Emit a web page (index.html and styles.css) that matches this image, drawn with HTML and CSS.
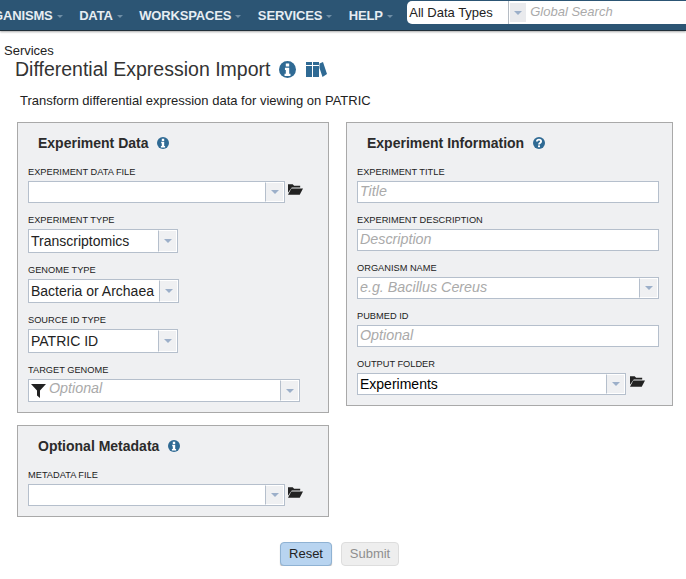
FILE: index.html
```html
<!DOCTYPE html>
<html lang="en">

<head>
  <meta charset="UTF-8">
  <title>Differential Expression Import</title>
  <link rel="stylesheet" href="styles.css">
</head>

<body>
  <div class="navbar">
    <span class="nav-item first">GANISMS<i class="caret"></i></span>
    <span class="nav-item">DATA<i class="caret"></i></span>
    <span class="nav-item">WORKSPACES<i class="caret"></i></span>
    <span class="nav-item">SERVICES<i class="caret"></i></span>
    <span class="nav-item">HELP<i class="caret"></i></span>
    <div class="search">
      <span class="search-type">All Data Types</span>
      <span class="search-arrow"><i></i></span>
      <span class="search-text">Global Search</span>
    </div>
  </div>

  <div class="crumb">Services</div>
  <div class="title-row">
    <span class="title">Differential Expression Import</span>
    <svg class="icon-info-lg" viewBox="0 0 20 20"><use href="#info"></use></svg>
    <svg class="icon-books" viewBox="0 0 21 15">
      <path fill="#2f6a94" d="M0 0h6v3H0zM0 4h6v11H0zM7 0h6v3H7zM7 4h6v11H7zM13.500 1.500L17 0l4 12-4.500 3L13.500 6z" />
    </svg>
  </div>
  <p class="intro">Transform differential expression data for viewing on PATRIC</p>

  <div class="columns">
    <div class="col">
      <div class="panel data-panel">
        <h3>Experiment Data <svg class="icon-info" viewBox="0 0 20 20"><use href="#info"></use></svg></h3>
        <label>EXPERIMENT DATA FILE</label>
        <div class="file-row">
          <div class="combo w257"><span class="value"></span><span class="arrow"><i></i></span></div>
          <svg class="folder" viewBox="0 0 16 12"><use href="#folder"></use></svg>
        </div>
        <label>EXPERIMENT TYPE</label>
        <div class="combo tall w150"><span class="value big">Transcriptomics</span><span class="arrow"><i></i></span></div>
        <label>GENOME TYPE</label>
        <div class="combo tall w151"><span class="value big">Bacteria or Archaea</span><span class="arrow"><i></i></span></div>
        <label>SOURCE ID TYPE</label>
        <div class="combo tall w150"><span class="value big">PATRIC ID</span><span class="arrow"><i></i></span></div>
        <label>TARGET GENOME</label>
        <div class="combo target w272">
          <svg class="filter" viewBox="0 0 15 14"><path fill="#222" d="M0 0h15L9 6.500V14L6 11.500V6.500z" /></svg>
          <span class="value hint">Optional</span><span class="arrow"><i></i></span>
        </div>
      </div>

      <div class="panel meta-panel">
        <h3>Optional Metadata <svg class="icon-info" viewBox="0 0 20 20"><use href="#info"></use></svg></h3>
        <label>METADATA FILE</label>
        <div class="file-row">
          <div class="combo w257"><span class="value"></span><span class="arrow"><i></i></span></div>
          <svg class="folder" viewBox="0 0 16 12"><use href="#folder"></use></svg>
        </div>
      </div>
    </div>

    <div class="col">
      <div class="panel info-panel">
        <h3>Experiment Information <svg class="icon-info" viewBox="0 0 20 20">
            <circle cx="10" cy="10" r="10" fill="#2f6a94" />
            <path fill="none" stroke="#fff" stroke-width="3" d="M6.500 7.500C6.500 3.500 13.500 3.500 13.500 7.500C13.500 10 10 10 10 12.500" />
            <path fill="#fff" d="M8.300 14h3.400v3H8.300z" />
          </svg></h3>
        <label>EXPERIMENT TITLE</label>
        <div class="text-box w302"><span class="value hint">Title</span></div>
        <label>EXPERIMENT DESCRIPTION</label>
        <div class="text-box w302"><span class="value hint">Description</span></div>
        <label>ORGANISM NAME</label>
        <div class="combo w302"><span class="value hint">e.g. Bacillus Cereus</span><span class="arrow"><i></i></span></div>
        <label>PUBMED ID</label>
        <div class="text-box w302"><span class="value hint">Optional</span></div>
        <label>OUTPUT FOLDER</label>
        <div class="file-row output-row">
          <div class="combo w269"><span class="value dark">Experiments</span><span class="arrow"><i></i></span></div>
          <svg class="folder" viewBox="0 0 16 12"><use href="#folder"></use></svg>
        </div>
      </div>
    </div>
  </div>

  <div class="buttons">
    <span class="btn reset">Reset</span>
    <span class="btn submit">Submit</span>
  </div>

  <svg class="defs" width="0" height="0">
    <defs>
      <g id="info">
        <circle cx="10" cy="10" r="10" fill="#2f6a94" />
        <path fill="#fff" d="M8 3h4v3.500H8zM7 8h5v7h1.500v2.500h-7V15H8v-4.500H7z" />
      </g>
      <g id="folder">
        <path fill="#222" d="M0 1h5l1.500 1.500H13V4.500H4L0 10z" />
        <path fill="#222" d="M3.500 5.500H16L12.500 12H0z" />
      </g>
    </defs>
  </svg>
</body>

</html>
```

FILE: styles.css
```css
body {
  margin: 0;
  background-color: #fff;
  color: #222;
  font-family: "Liberation Sans", Arial, sans-serif;
  font-size: 13px;
  overflow: hidden;
}

.navbar {
  display: flex;
  align-items: center;
  height: 30px;
  background-color: #2c5574;
  border-bottom: 1px solid #22303a;
  box-shadow: 0 1px 2px #aaa;
  overflow: hidden;
  white-space: nowrap;
}

.nav-item {
  color: #e6edf2;
  font-size: 13px;
  letter-spacing: -0.15px;
  font-weight: bold;
  margin-right: 16.500px;
}

.nav-item.first {
  margin-left: -7px;
}

.caret {
  display: inline-block;
  margin-left: 4px;
  vertical-align: middle;
  border-top: 3px solid #6f8ea5;
  border-left: 3px solid transparent;
  border-right: 3px solid transparent;
}

.search {
  display: flex;
  align-items: center;
  align-self: flex-start;
  flex: 1;
  height: 23px;
  margin-top: 1px;
  margin-left: -2px;
  background-color: #fff;
  border-radius: 5px 0 0 5px;
}

.search-type {
  width: 99px;
  padding-left: 2px;
  color: #222;
  border-right: 1px solid #b5bcc4;
  line-height: 23px;
}

.search-arrow {
  display: flex;
  align-items: center;
  justify-content: center;
  width: 16px;
  height: 19px;
  margin-left: 1px;
  background-color: #e9eaed;
}

.search-arrow i {
  border-top: 4px solid #9cafc9;
  border-left: 4px solid transparent;
  border-right: 4px solid transparent;
}

.search-text {
  margin-left: 4px;
  color: #aaa;
  font-style: italic;
  padding-bottom: 3px;
}

.crumb {
  margin: 12px 0 0 4px;
  line-height: 15px;
}

.title-row {
  display: flex;
  align-items: center;
  margin: -1px 0 0 15px;
  height: 24px;
}

.title {
  font-size: 19.500px;
  color: #333;
}

.icon-info-lg {
  width: 17px;
  height: 17px;
  margin-left: 9px;
}

.icon-books {
  width: 21px;
  height: 15px;
  margin-left: 10px;
}

.intro {
  margin: 12px 0 0 20px;
  line-height: 15px;
}

.columns {
  display: flex;
  align-items: flex-start;
  gap: 17px;
  margin: 14px 0 0 17px;
}

.col {
  display: flex;
  flex-direction: column;
  gap: 12px;
}

.panel {
  box-sizing: border-box;
  background-color: #eff0f2;
  border: 1px solid #a9a9a9;
  padding: 0 10px;
}

.data-panel,
.meta-panel {
  width: 312px;
}

.data-panel {
  height: 291px;
}

.meta-panel {
  height: 92px;
}

.info-panel {
  width: 327px;
  height: 284px;
}

.panel h3 {
  display: flex;
  align-items: center;
  gap: 9px;
  height: 18px;
  margin: 11px 0 14px 10px;
  font-size: 14px;
  color: #2b2b2b;
}

.icon-info {
  width: 12px;
  height: 12px;
}

label {
  display: block;
  height: 12px;
  margin-bottom: 3px;
  font-size: 9.250px;
  line-height: 12px;
  color: #222;
}

.combo,
.text-box {
  display: flex;
  box-sizing: border-box;
  height: 22px;
  margin-bottom: 11px;
  background-color: #fff;
  border: 1px solid #b5bfcc;
}

.combo.tall {
  height: 24px;
}

.combo.target {
  height: 23px;
  margin-bottom: 0;
}

.w257 {
  width: 257px;
}

.w269 {
  width: 269px;
}

.w302 {
  width: 302px;
}

.w150 {
  width: 150px;
}

.w151 {
  width: 151px;
}

.w272 {
  width: 272px;
}

.value {
  flex: 1;
  min-width: 0;
  padding-left: 2px;
  font-size: 14px;
  line-height: 20px;
  white-space: nowrap;
  overflow: hidden;
}

.value.big {
  line-height: 22px;
  color: #222;
}

.value.dark {
  color: #000;
}

.value.hint {
  color: #aaa;
  font-style: italic;
  font-size: 14.300px;
  line-height: 18px;
}

.target .value.hint {
  line-height: 17px;
}

.arrow {
  display: flex;
  align-items: center;
  justify-content: center;
  box-sizing: border-box;
  width: 19px;
  background-color: #eff0f2;
  border-left: 1px solid #b5bfcc;
  border-top: 1px solid #fff;
  border-bottom: 1px solid #fff;
  border-right: 1px solid #fff;
}

.arrow i {
  border-top: 4px solid #9cafc9;
  border-left: 4px solid transparent;
  border-right: 4px solid transparent;
}

.file-row {
  display: flex;
  align-items: flex-start;
  gap: 3px;
}

.output-row {
  gap: 4px;
}

.file-row .folder {
  width: 15px;
  height: 12px;
  margin-top: 2px;
}

.filter {
  width: 15px;
  height: 14px;
  margin: 4px 0 0 2px;
}

.target .value {
  padding-left: 3px;
}

.file-row .combo {
  margin-bottom: 0;
}

.data-panel .file-row {
  margin-bottom: 11px;
}

.buttons {
  display: flex;
  justify-content: center;
  gap: 9px;
  margin-top: 25px;
  padding-right: 7px;
}

.btn {
  box-sizing: border-box;
  height: 24px;
  border-radius: 4px;
  font-size: 13px;
  line-height: 22px;
  text-align: center;
}

.reset {
  width: 52px;
  background-color: #b8d4f0;
  border: 1px solid #8fb2d3;
  box-shadow: 0 1px 1px #bbb;
  color: #222;
}

.submit {
  width: 58px;
  background-color: #eee;
  border: 1px solid #ddd;
  color: #8f8f8f;
}

.defs {
  display: block;
}
```
